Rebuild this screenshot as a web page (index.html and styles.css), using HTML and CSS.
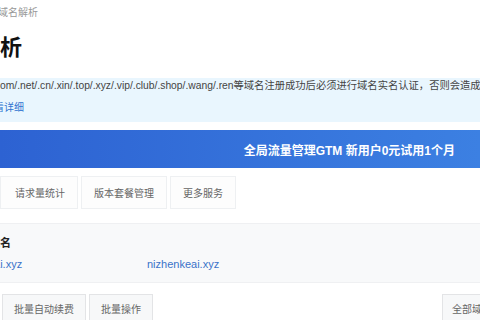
FILE: index.html
```html
<!DOCTYPE html>
<html lang="zh-CN">
<head>
    <meta charset="UTF-8">
    <meta name="viewport" content="width=device-width, initial-scale=1.0">
    <title>域名解析</title>
    <link rel="stylesheet" href="styles.css">
</head>
<body>
    <div class="page">
        <div class="breadcrumb">域名解析</div>
        <h1 class="page-title">域名解析</h1>

        <div class="notice">
            <p class="notice-text">om/.net/.cn/.xin/.top/.xyz/.vip/.club/.shop/.wang/.ren等域名注册成功后必须进行域名实名认证，否则会造成解析不生效</p>
            <a href="#" class="notice-link">查看详细</a>
        </div>

        <div class="promo">
            <span class="promo-text">全局流量管理GTM 新用户0元试用1个月</span>
        </div>

        <div class="tabs">
            <a href="#" class="tab">请求量统计</a>
            <a href="#" class="tab">版本套餐管理</a>
            <a href="#" class="tab">更多服务</a>
        </div>

        <div class="recent">
            <div class="recent-title">域名</div>
            <div class="recent-list">
                <a href="#" class="recent-item">nizhenkeai.xyz</a>
                <a href="#" class="recent-item">nizhenkeai.xyz</a>
            </div>
        </div>

        <div class="toolbar">
            <div class="toolbar-left">
                <button class="btn">批量自动续费</button>
                <button class="btn">批量操作</button>
            </div>
            <button class="btn btn-filter">全部域名</button>
        </div>
    </div>
</body>
</html>
```

FILE: styles.css
```css
body {
    margin: 0;
    padding: 0;
    background: #fff;
    font-family: 'Liberation Sans', 'Noto Sans CJK SC', sans-serif;
    color: #333;
    overflow: hidden;
}
.page {
    width: 480px;
    height: 320px;
    overflow: hidden;
}
.breadcrumb {
    padding-top: 6px;
    margin-left: -2px;
    font-size: 10px;
    line-height: 14px;
    color: #999;
}
.page-title {
    margin: 13px 0 0 -66px;
    font-size: 22px;
    line-height: 30px;
    font-weight: bold;
    color: #111;
}
.notice {
    margin-top: 15px;
    padding: 1px 0 7px;
    background-color: #e9f6fe;
    white-space: nowrap;
    overflow: hidden;
}
.notice-text {
    margin: 0;
    font-size: 10.3px;
    line-height: 14px;
    color: #444;
}
.notice-link {
    display: block;
    margin: 8px 0 0 -16px;
    font-size: 10px;
    line-height: 14px;
    color: #2f74d0;
    text-decoration: none;
}
.promo {
    margin-top: 8px;
    height: 38px;
    display: flex;
    align-items: center;
    justify-content: flex-end;
    padding-right: 25px;
    background: linear-gradient(90deg, #2d62d2, #3c80e2);
}
.promo-text {
    font-size: 12px;
    font-weight: bold;
    color: #fff;
}
.tabs {
    margin-top: 8px;
    display: flex;
    gap: 3px;
}
.tab {
    height: 33px;
    padding: 0 12px;
    box-sizing: border-box;
    display: flex;
    align-items: center;
    border: 1px solid #eef0f2;
    background-color: #fdfdfd;
    font-size: 10px;
    color: #666;
    text-decoration: none;
}
.tab:first-child {
    padding-left: 14px;
    padding-right: 12px;
}
.recent {
    margin-top: 14px;
    height: 60px;
    box-sizing: border-box;
    padding-top: 11px;
    background-color: #f8f9fa;
    border-top: 1px solid #eff0f2;
    border-bottom: 1px solid #eff0f2;
}
.recent-title {
    margin-left: -11px;
    font-size: 11px;
    line-height: 16px;
    font-weight: bold;
    color: #222;
}
.recent-list {
    margin: 5px 0 0 -50px;
    display: flex;
}
.recent-item {
    width: 197px;
    font-size: 11px;
    line-height: 16px;
    color: #3a73c9;
    text-decoration: none;
}
.toolbar {
    margin-top: 11px;
    display: flex;
    justify-content: space-between;
}
.toolbar-left {
    display: flex;
    gap: 3px;
    padding-left: 2px;
}
.btn {
    height: 28px;
    padding: 0 11px;
    border: 1px solid #e3e4e6;
    background-color: #f7f8f9;
    font-family: inherit;
    font-size: 10px;
    color: #666;
}
.btn-filter {
    margin-right: -22px;
    padding: 0 9px;
}
```
